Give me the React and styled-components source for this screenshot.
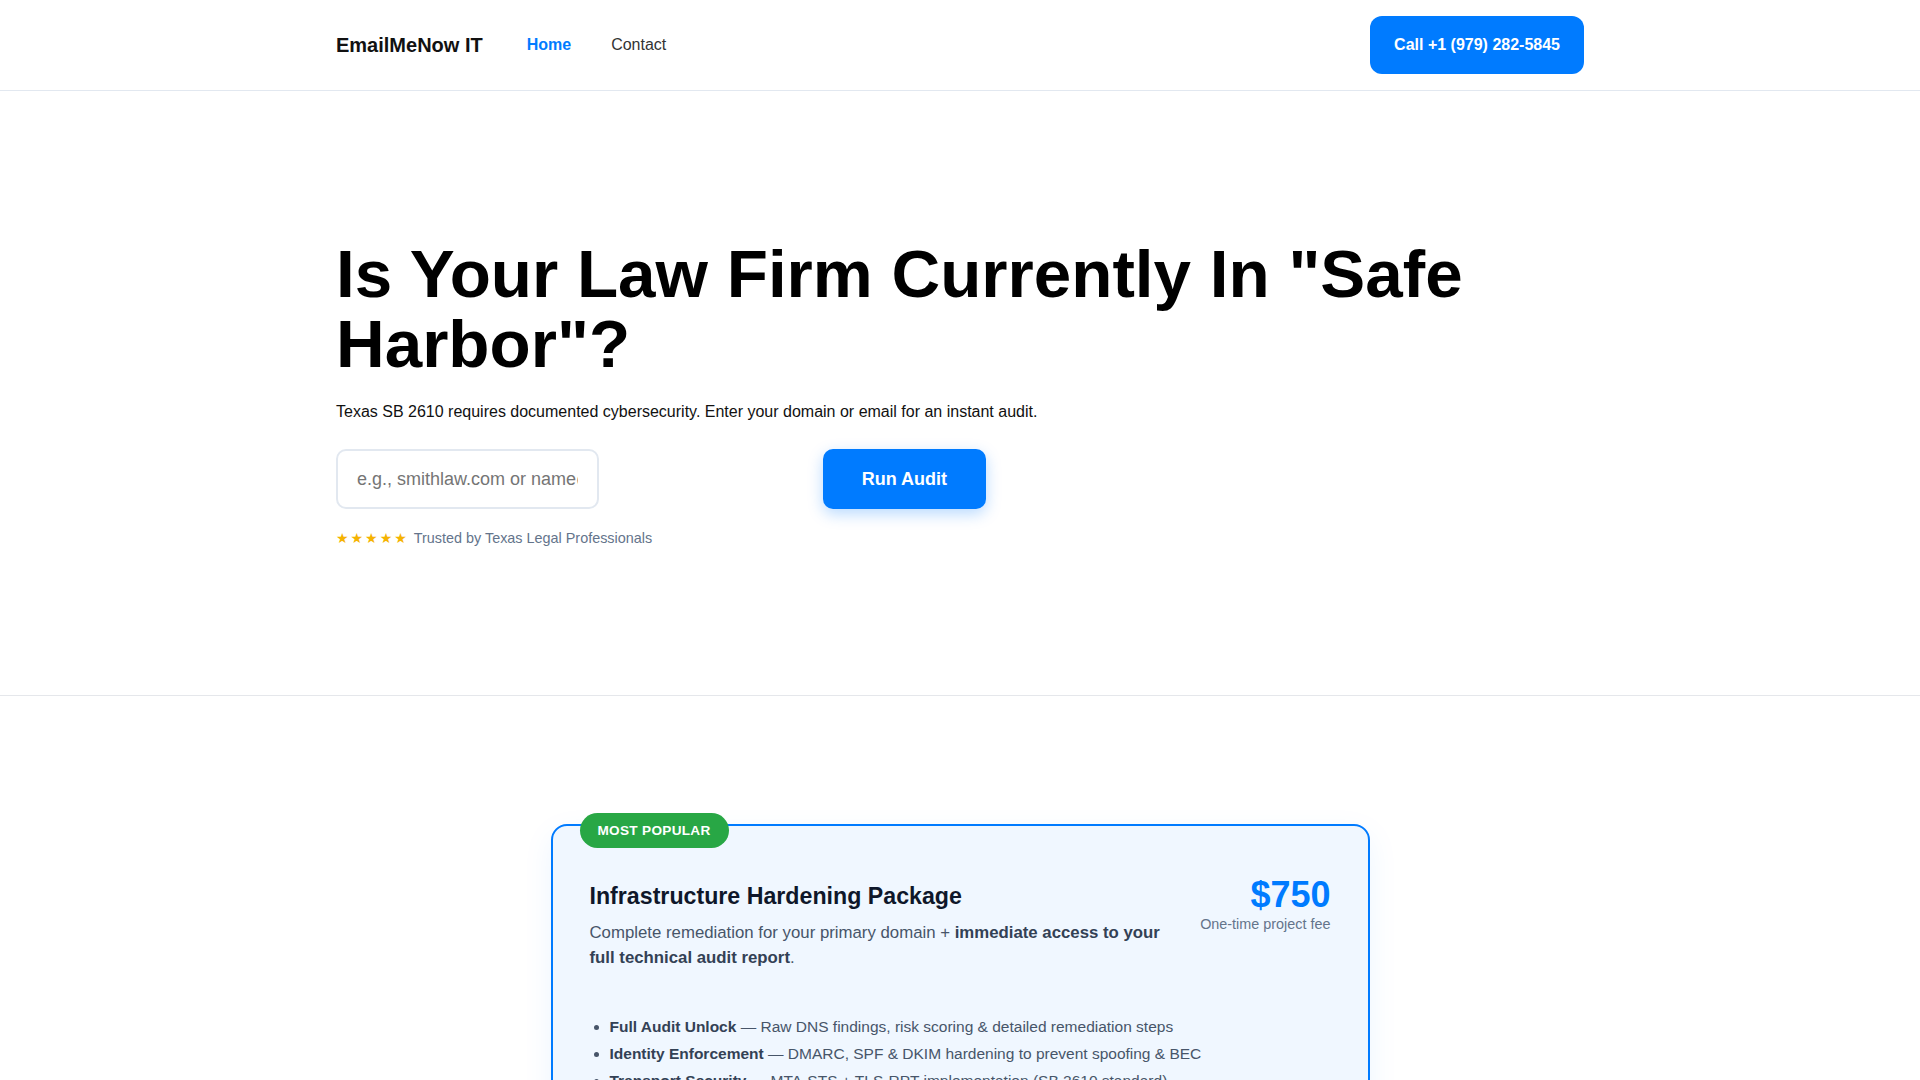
import React from 'react';
import styled, { createGlobalStyle } from 'styled-components';

const GlobalStyle = createGlobalStyle`
  *, *::before, *::after {
    box-sizing: border-box;
  }
  html {
    scrollbar-width: none;
  }
  body {
    margin: 0;
    background: #ffffff;
    color: #111111;
    font-family: "Liberation Sans", Arial, Helvetica, sans-serif;
  }
`;

const Container = styled.div`
  width: 1248px;
  max-width: calc(100% - 32px);
  margin: 0 auto;
`;

const Header = styled.header`
  border-bottom: 1px solid #e2e8f0;
  background: #ffffff;
`;

const HeaderInner = styled(Container)`
  display: flex;
  align-items: center;
  justify-content: space-between;
  padding: 16px 0;
`;

const Brand = styled.div`
  display: flex;
  align-items: center;
`;

const Logo = styled.a`
  font-size: 20px;
  font-weight: 700;
  color: #111111;
  text-decoration: none;
  margin-right: 44px;
`;

const NavLinks = styled.nav`
  display: flex;
  gap: 40px;
`;

const NavLink = styled.a`
  font-size: 16px;
  text-decoration: none;
  font-weight: ${(p) => (p.$active ? 700 : 400)};
  color: ${(p) => (p.$active ? '#007bff' : '#333333')};
`;

const CallButton = styled.a`
  display: inline-block;
  background: #007bff;
  color: #ffffff;
  font-size: 16px;
  font-weight: 700;
  line-height: 20px;
  padding: 19px 24px;
  border-radius: 12px;
  text-decoration: none;
`;

const Hero = styled.section`
  border-bottom: 1px solid #e5e7eb;
`;

const HeroInner = styled(Container)`
  padding: 147.5px 0 146px;
`;

const Title = styled.h1`
  margin: 0 0 20px;
  font-size: 67.4px;
  line-height: 1.04;
  font-weight: 700;
  color: #000000;
`;

const Lead = styled.p`
  margin: 0 0 25px;
  font-size: 16px;
  line-height: 1.6;
  color: #111111;
`;

const AuditForm = styled.form`
  display: flex;
  justify-content: space-between;
  align-items: stretch;
  max-width: 650px;
`;

const DomainInput = styled.input`
  width: 263px;
  height: 60px;
  padding: 0 19px;
  border: 2px solid #e2e8f0;
  border-radius: 10px;
  font-family: inherit;
  font-size: 18px;
  color: #111111;
  background: #ffffff;
  outline: none;
  &::placeholder {
    color: #757575;
  }
`;

const RunButton = styled.button`
  height: 60px;
  padding: 0 39px;
  border: none;
  border-radius: 10px;
  background: #007bff;
  color: #ffffff;
  font-family: inherit;
  font-size: 18px;
  font-weight: 700;
  cursor: pointer;
  box-shadow: 0 5px 15px rgba(0, 123, 255, 0.28);
`;

const Trust = styled.div`
  display: flex;
  align-items: center;
  gap: 5px;
  margin-top: 19px;
  font-size: 14.4px;
  line-height: 21px;
  color: #64748b;
`;

const Stars = styled.span`
  font-family: "DejaVu Sans", sans-serif;
  font-size: 14px;
  letter-spacing: 2px;
  color: #f5b301;
`;

const Pricing = styled.section`
  padding: 128px 16px 80px;
`;

const Card = styled.div`
  position: relative;
  max-width: 819px;
  margin: 0 auto;
  padding: 48.5px 37px 40px;
  background: #f0f7ff;
  border: 2px solid #007bff;
  border-radius: 16px;
  box-shadow: 0 10px 30px rgba(0, 123, 255, 0.08);
`;

const Badge = styled.span`
  position: absolute;
  top: -13px;
  left: 27px;
  padding: 9px 18px;
  border-radius: 999px;
  background: #28a745;
  color: #ffffff;
  font-size: 13.6px;
  line-height: 17px;
  font-weight: 700;
  letter-spacing: 0.3px;
  text-transform: uppercase;
`;

const CardHead = styled.div`
  display: flex;
  align-items: flex-start;
  justify-content: space-between;
  gap: 32px;
`;

const PlanInfo = styled.div`
  flex: 1;
  min-width: 0;
  padding-top: 7.8px;
`;

const PlanName = styled.h3`
  margin: 0 0 11px;
  font-size: 23.2px;
  line-height: 1.2;
  font-weight: 700;
  color: #0f172a;
`;

const PlanText = styled.p`
  margin: 0;
  font-size: 16.8px;
  line-height: 1.45;
  color: #475569;
  strong {
    color: #334155;
  }
`;

const PriceBox = styled.div`
  flex-shrink: 0;
  text-align: right;
`;

const Price = styled.div`
  font-size: 36px;
  line-height: 1.1;
  font-weight: 700;
  color: #007bff;
`;

const PriceNote = styled.div`
  font-size: 14.4px;
  line-height: 1.4;
  color: #64748b;
`;

const Features = styled.ul`
  margin: 42.5px 0 0;
  padding-left: 20px;
  font-size: 15.5px;
  line-height: 1.75;
  color: #475569;
  strong {
    color: #334155;
  }
`;

const features = [
  ['Full Audit Unlock', 'Raw DNS findings, risk scoring & detailed remediation steps'],
  ['Identity Enforcement', 'DMARC, SPF & DKIM hardening to prevent spoofing & BEC'],
  ['Transport Security', 'MTA-STS + TLS-RPT implementation (SB 2610 standard)'],
  ['Compliance Documentation', 'Written safe harbor evidence for your records'],
];

export default function App() {
  return (
    <>
      <GlobalStyle />
      <Header>
        <HeaderInner>
          <Brand>
            <Logo href="#">EmailMeNow IT</Logo>
            <NavLinks>
              <NavLink href="#" $active>
                Home
              </NavLink>
              <NavLink href="#">Contact</NavLink>
            </NavLinks>
          </Brand>
          <CallButton href="#">Call +1 (979) 282-5845</CallButton>
        </HeaderInner>
      </Header>

      <Hero>
        <HeroInner>
          <Title>Is Your Law Firm Currently In "Safe Harbor"?</Title>
          <Lead>
            Texas SB 2610 requires documented cybersecurity. Enter your domain or email for an
            instant audit.
          </Lead>
          <AuditForm onSubmit={(e) => e.preventDefault()}>
            <DomainInput type="text" placeholder="e.g., smithlaw.com or name@lawfirm.com" />
            <RunButton type="submit">Run Audit</RunButton>
          </AuditForm>
          <Trust>
            <Stars>★★★★★</Stars>
            <span>Trusted by Texas Legal Professionals</span>
          </Trust>
        </HeroInner>
      </Hero>

      <Pricing>
        <Card>
          <Badge>Most Popular</Badge>
          <CardHead>
            <PlanInfo>
              <PlanName>Infrastructure Hardening Package</PlanName>
              <PlanText>
                Complete remediation for your primary domain +{' '}
                <strong>immediate access to your full technical audit report</strong>.
              </PlanText>
            </PlanInfo>
            <PriceBox>
              <Price>$750</Price>
              <PriceNote>One-time project fee</PriceNote>
            </PriceBox>
          </CardHead>
          <Features>
            {features.map(([name, text]) => (
              <li key={name}>
                <strong>{name}</strong> — {text}
              </li>
            ))}
          </Features>
        </Card>
      </Pricing>
    </>
  );
}
